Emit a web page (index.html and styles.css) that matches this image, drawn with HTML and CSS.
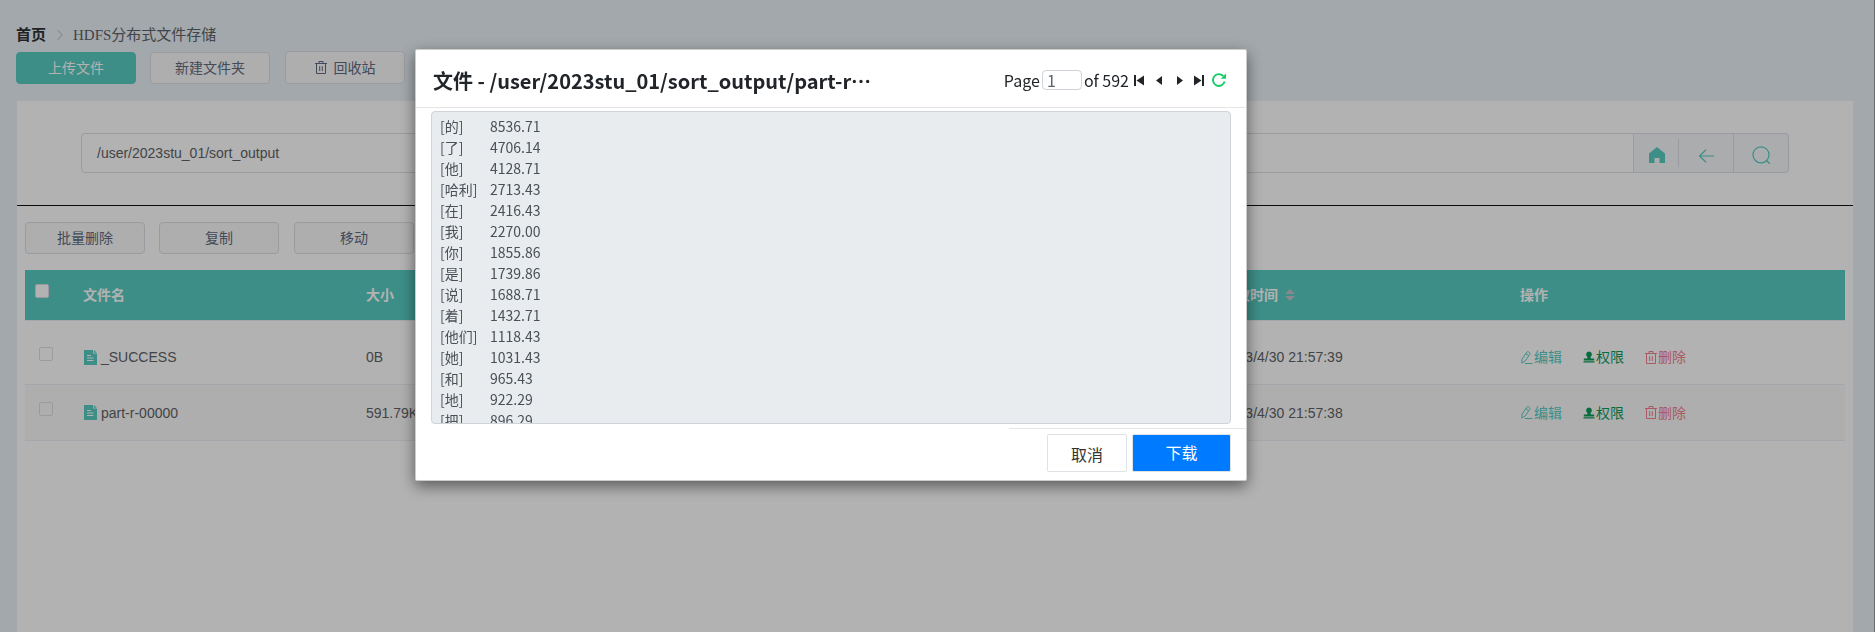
FILE: index.html
```html
<!DOCTYPE html>
<html lang="zh-CN">
<head>
<meta charset="utf-8">
<title>HDFS分布式文件存储</title>
<link rel="stylesheet" href="styles.css">
</head>
<body>
<svg class="sprite" aria-hidden="true">
  <symbol id="i-trash" viewBox="0 0 12 13"><path d="M0 2.5h12M4 2.5v-2h4v2M1.5 2.5v10h9v-10M4.7 5.2v4.8M7.3 5.2v4.8" fill="none" stroke="currentColor"/></symbol>
  <symbol id="i-file" viewBox="0 0 13 15"><path d="M0 0h9v3.500h4V15H0z" fill="currentColor"/><path d="M9.800 0l3 2.800h-3z" fill="currentColor"/><path d="M3 5.500h4M3 8h6.500M3 10.500h6.500" stroke="#fff"/></symbol>
  <symbol id="i-edit" viewBox="0 0 12 13"><path d="M1 8.2L5.8 1.2Q6.5.3 7.5.9L8.6 1.7Q9.4 2.4 8.8 3.3L4 10.2.8 12zM4.8 2.7l2.9 2M4 12.5h7.5" fill="none" stroke="currentColor"/></symbol>
  <symbol id="i-stamp" viewBox="0 0 12 12"><path d="M6 .5a2.9 2.9 0 0 1 2 5c-.6.6-.6 1.500 0 2h3.200v2H.8v-2H4c.6-.5.6-1.400 0-2a2.900 2.900 0 0 1 2-5zM.5 10.200h11v1.300H.5z" fill="currentColor"/></symbol>
</svg>
<div class="page">
  <nav class="crumbs">
    <b>首页</b>
    <svg width="7" height="12" viewBox="0 0 7 12"><path d="M1 .5l5 5.500-5 5.500" fill="none" stroke="#c0c4cc" stroke-width="1.200"/></svg>
    <span>HDFS分布式文件存储</span>
  </nav>
  <div class="actions">
    <button class="btn primary">上传文件</button>
    <button class="btn">新建文件夹</button>
    <button class="btn tall"><svg width="12" height="13"><use href="#i-trash"/></svg>回收站</button>
  </div>
  <main class="panel">
    <div class="path">
      <div class="path-input">/user/2023stu_01/sort_output</div>
      <div class="path-tools">
        <span class="tool home"><svg width="16" height="16" viewBox="0 0 16 16"><path d="M8 0l8 6.500V16h-5.500v-5h-5v5H0V6.500z" fill="currentColor"/></svg></span>
        <span class="tool back"><svg width="17" height="14" viewBox="0 0 17 14"><path d="M8 .8L1.500 7 8 13.200M1.500 7H16" fill="none" stroke="currentColor" stroke-width="1.200"/></svg></span>
        <span class="tool search"><svg width="19" height="19" viewBox="0 0 19 19"><circle cx="9" cy="8.800" r="8" fill="none" stroke="currentColor" stroke-width="1.200"/><path d="M14.500 14.500l3.300 3.300" stroke="currentColor" stroke-width="1.300"/></svg></span>
      </div>
    </div>
    <div class="bulk">
      <button class="btn">批量删除</button>
      <button class="btn">复制</button>
      <button class="btn">移动</button>
    </div>
    <div class="table">
      <div class="row head">
        <span class="c-check"><i class="box"></i></span><span>文件名</span><span>大小</span>
        <span class="sortable">修改时间<svg width="10" height="12" viewBox="0 0 10 12"><path d="M0 5l5-5 5 5zM0 7l5 5 5-5z" fill="#c0c4cc"/></svg></span>
        <span>操作</span>
      </div>
      <div class="row first">
        <span class="c-check"><i class="box"></i></span>
        <span class="name"><svg width="13" height="15"><use href="#i-file"/></svg>_SUCCESS</span>
        <span>0B</span><span>2023/4/30 21:57:39</span>
        <span class="ops"><a class="edit"><svg width="12" height="13"><use href="#i-edit"/></svg>编辑</a><a class="perm"><svg width="12" height="12"><use href="#i-stamp"/></svg>权限</a><a class="del"><svg width="12" height="13"><use href="#i-trash"/></svg>删除</a></span>
      </div>
      <div class="row striped">
        <span class="c-check"><i class="box"></i></span>
        <span class="name"><svg width="13" height="15"><use href="#i-file"/></svg>part-r-00000</span>
        <span>591.79KB</span><span>2023/4/30 21:57:38</span>
        <span class="ops"><a class="edit"><svg width="12" height="13"><use href="#i-edit"/></svg>编辑</a><a class="perm"><svg width="12" height="12"><use href="#i-stamp"/></svg>权限</a><a class="del"><svg width="12" height="13"><use href="#i-trash"/></svg>删除</a></span>
      </div>
    </div>
  </main>
</div>
<div class="shade">
  <section class="modal">
    <header class="modal-head">
      <h4>文件 - /user/2023stu_01/sort_output/part-r⋯</h4>
      <div class="pager">
        <span>Page</span><span class="num">1</span><span>of 592</span>
        <svg class="p-first" width="10" height="11" viewBox="0 0 10 11"><path d="M0 0h2v11H0zM10 .5v10L2.500 5.500z"/></svg>
        <svg class="p-prev" width="6" height="9" viewBox="0 0 6 9"><path d="M6 0v9L0 4.500z"/></svg>
        <svg class="p-next" width="6" height="9" viewBox="0 0 6 9"><path d="M0 0v9l6-4.500z"/></svg>
        <svg class="p-last" width="10" height="11" viewBox="0 0 10 11"><path d="M8 0h2v11H8zM0 .5v10l7.500-5z"/></svg>
        <svg class="p-reload" width="14" height="14" viewBox="0 0 14 14"><path d="M12.600 8.500A5.900 5.900 0 1 1 11.300 3.100" fill="none" stroke="#13ce66" stroke-width="1.900"/><path d="M14 .5v5.200H8.800z" fill="#13ce66"/></svg>
      </div>
    </header>
    <pre class="content">[的]	8536.71
[了]	4706.14
[他]	4128.71
[哈利]	2713.43
[在]	2416.43
[我]	2270.00
[你]	1855.86
[是]	1739.86
[说]	1688.71
[着]	1432.71
[他们]	1118.43
[她]	1031.43
[和]	965.43
[地]	922.29
[把]	896.29</pre>
    <footer class="modal-foot">
      <button class="cancel">取消</button>
      <button class="download">下载</button>
    </footer>
  </section>
</div>
</body>
</html>
```
FILE: styles.css
```css
* { box-sizing: border-box; }
body { margin: 0; height: 632px; overflow: hidden; font: 14px/20px "Liberation Sans", "Noto Sans CJK SC", sans-serif; color: #606266; }
button { font-family: inherit; margin: 0; }
svg { flex: none; }
.sprite { display: none; }
.page { height: 632px; padding: 25px 21px 0 16px; background: #e9f1f6; border-right: 1px solid #979ca0; display: flex; flex-direction: column; }

.crumbs { height: 20px; display: flex; align-items: center; font: 15px/20px "Liberation Serif", "Noto Sans CJK SC", serif; white-space: nowrap; }
.crumbs b { color: #303133; width: 30px; }
.crumbs svg { margin: 0 10px 0 11px; width: 6px; }

.actions { display: flex; align-items: flex-end; height: 39px; gap: 14px; }
.btn { width: 120px; height: 32px; border: 1px solid #dcdfe6; border-radius: 4px; background: #f9f9f9; color: #606a80; font-size: 14px; line-height: 20px; padding: 0; display: flex; align-items: center; justify-content: center; }
.btn.primary { background: #57ccc2; border-color: #57ccc2; color: #fff; }
.actions .btn.tall, .bulk .btn:last-child { margin-left: 1px; }
.actions .btn.tall { height: 33px; gap: 7px; }

.panel { flex: 1; margin: 17px 0 0 1px; background: #fff; }
.path { height: 105px; padding: 32px 64px 0; border-bottom: 1px solid #111; display: flex; align-items: flex-start; }
.path-input { flex: 1; height: 40px; border: 1px solid #dcdfe6; border-radius: 4px 0 0 4px; padding: 0 15px; line-height: 38px; }
.path-tools { width: 155px; height: 40px; border: 1px solid #dcdfe6; border-left: 0; border-radius: 0 4px 4px 0; background: #f5f7fa; color: #57ccc2; display: flex; align-items: center; }
.tool { display: flex; align-items: center; justify-content: center; }
.home { width: 45px; height: 28px; border-right: 1px solid #dcdfe6; padding: 4px 0 0 2px; }
.back { width: 55px; height: 38px; border-right: 1px solid #dcdfe6; padding: 5px 2px 0 3px; }
.search { width: 54px; height: 38px; padding: 4px 0 0 1px; }
.bulk { display: flex; gap: 14px; padding: 16px 0 16px 8px; }
.bulk .btn { background: #fafafa; }

.table { margin: 0 8px; }
.row { display: grid; grid-template-columns: 58px 283px 856px 298px 1fr; align-items: center; height: 56px; border-bottom: 1px solid #ebeef5; white-space: nowrap; }
.row.head { height: 51px; background: #57ccc2 padding-box; color: #fff; font-weight: bold; }
.row.first { height: 64px; padding-top: 9px; }
.row.striped { background: #fafafa; }
.box { display: block; width: 14px; height: 14px; border: 1px solid #dcdfe6; border-radius: 2px; background: #fff; margin: 0 0 7px 14px; }
.row.striped .box { background: transparent; }
.head .box { margin: 0 0 8px 10px; }
.sortable { display: flex; align-items: center; gap: 7px; }
.name { display: flex; align-items: center; gap: 4px; padding-left: 1px; }
.name svg { color: #57ccc2; }
.ops { display: flex; padding-left: 1px; }
.ops a { display: flex; align-items: center; gap: 1px; margin-right: 21px; }
.ops .edit { color: #57ccc2; }
.ops .perm { color: #0d9b5b; }
.ops .del { color: #f08090; }

.shade { position: fixed; inset: 0; background: rgba(0,0,0,.3); }
.modal { position: absolute; left: 415px; top: 49px; width: 832px; height: 432px; background: #fff; border: 1px solid rgba(0,0,0,.2); border-radius: 2px; box-shadow: 0 5px 15px rgba(0,0,0,.5); color: #212529; font-family: "Noto Sans CJK SC", sans-serif; display: flex; flex-direction: column; }
.modal-head { height: 58px; border-bottom: 1px solid #e5e5e5; display: flex; align-items: center; justify-content: space-between; padding: 5px 20px 0 17px; }
h4 { margin: 0; font-size: 20px; line-height: 30px; font-weight: bold; white-space: nowrap; }
.pager { display: flex; align-items: center; font-size: 16px; line-height: 24px; white-space: nowrap; margin-bottom: 2px; }
.pager svg { fill: #212529; }
.num { width: 40px; height: 20px; border: 1px solid #ced4da; border-radius: 4px; margin: -1px 2px 0; padding-left: 4px; line-height: 19px; color: #606266; }
.p-first { margin-left: 5px; }
.p-prev { margin-left: 12px; }
.p-next { margin-left: 15px; }
.p-last { margin-left: 11px; }
.p-reload { margin-left: 8px; }
.content { margin: 3px 15px 0; height: 313px; overflow: hidden; border: 1px solid #ced4da; border-radius: 4px; background: #e9ecef; padding: 4px 8px; font: 14px/21px "Noto Sans CJK SC", sans-serif; color: #495057; tab-size: 50px; }
.modal-foot { align-self: flex-end; width: 237px; margin-top: 4px; border-top: 1px solid #e5e5e5; padding: 5px 15px 0 0; display: flex; justify-content: flex-end; gap: 5px; }
.modal-foot button { height: 38px; border: 1px solid #dee2e6; border-radius: 2px; font-size: 16px; line-height: 24px; background: #fff; color: #333; padding: 2px 0 0; }
.modal-foot .cancel { width: 80px; }
.modal-foot .download { width: 99px; background: #007bff; color: #fff; padding: 0 0 2px; }
```
